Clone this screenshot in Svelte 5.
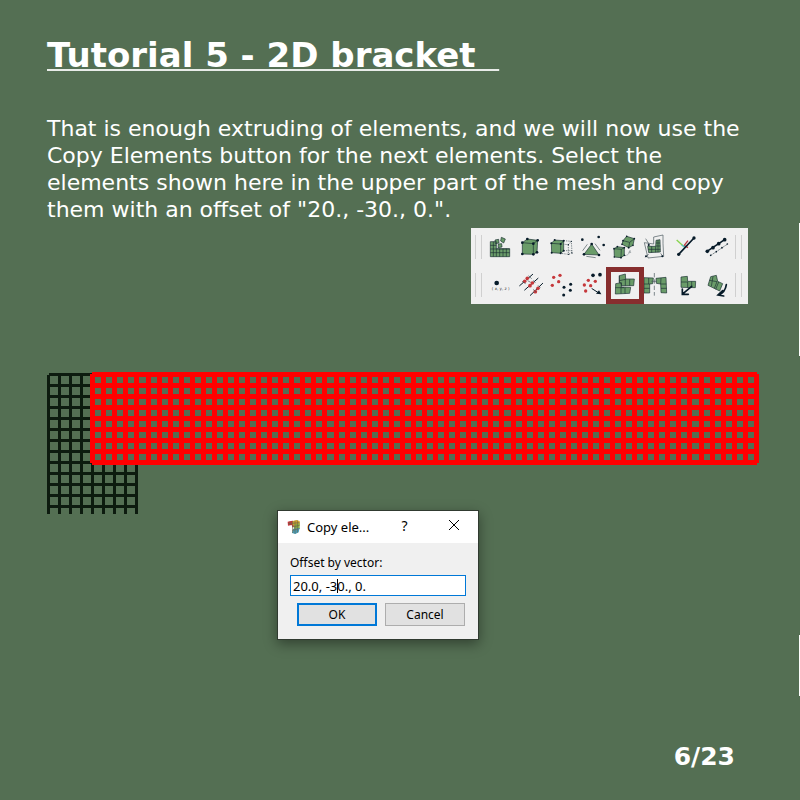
<script>
  const title = 'Tutorial 5 - 2D bracket\u00a0\u00a0';
  let vector = $state('20.0, -30., 0.');

  const darkCols = Array.from({ length: 9 }, (_, k) => k * 11);
  const darkRows = Array.from({ length: 13 }, (_, k) => 1 + k * 11);
  const redCols = Array.from({ length: 61 }, (_, k) => 43 + 11 * k + Math.floor(k * 0.06 + 0.72));
  const redRows = Array.from({ length: 9 }, (_, k) => k * 11);

  const topTools = ['Grid', 'Solid', 'Extrude', 'Fill', 'Copy solid', 'Project', 'Split edge', 'Refine edge'];
  const bottomTools = ['Create node', 'Merge nodes', 'Copy nodes', 'Move nodes', 'Copy elements', 'Mirror elements', 'Move elements', 'Rotate elements'];
</script>

{#snippet dots(points, r, cls)}
  {#each points as [x, y]}
    <circle cx={x} cy={y} {r} class={cls} />
  {/each}
{/snippet}

{#snippet topIcon(i)}
  {#if i === 0}
    <path class="g" d="M76 59H94V80H134V104H76ZM90 54l11-2 1 11-11 2ZM109 46l12 5-5 12-9-6ZM100 66l10-1 1 10-12 2Z" />
    <path class="l" d="M76 70H94M76 81H134M76 92H134M85 59V104M94 80V104M104 80V104M114 80V104M124 80V104" />
  {:else if i === 1}
    <path class="g" d="M172 62L187 51L218 55L216 91L205 97L172 96Z" />
    <path class="l" d="M172 62L205 65L218 55M205 65V97" />
    {@render dots([[172, 62], [187, 51], [218, 55], [216, 91], [205, 97], [172, 96], [205, 65]], 4, 'k')}
  {:else if i === 2}
    <path class="g" d="M259 64L269 54L296 56L296 86L287 94L260 92Z" />
    <path class="l" d="M259 64L287 66L296 56M287 66V94" />
    <path class="thin" stroke-dasharray="4 3" d="M296 56L319 58L321 91L311 97L287 94M287 66L310 68L319 58M310 68V97M296 86H321" />
    {@render dots([[259, 64], [269, 54], [296, 56], [296, 86], [287, 94], [260, 92], [287, 66]], 3, 'k')}
    {@render dots([[319, 58], [310, 68], [321, 93], [311, 97]], 2, 'k')}
  {:else if i === 3}
    <path class="g" d="M380 66L402 99L357 97Z" />
    <path class="thin" d="M367 67L353 86M390 65L405 85M364 103L392 107" />
    {@render dots([[380, 66], [402, 99], [357, 97], [352, 53], [401, 45], [416, 69]], 4, 'k')}
  {:else if i === 4}
    <path class="g" d="M447 80L457 74L478 77L478 100L468 107L448 105ZM474 56L485 43L508 50L504 70L491 77L471 67Z" />
    <path class="l" d="M447 80L469 82L478 77M469 82L468 107M474 56L494 61L508 50M494 61L491 77" />
    <path class="thin" stroke-dasharray="3 2" d="M480 101Q492 99 495 87M491 91L495 86L497 92" />
    {@render dots([[447, 80], [457, 74], [478, 77], [478, 100], [468, 107], [448, 105], [474, 56], [485, 43], [508, 50], [504, 70], [491, 77], [471, 67]], 2.5, 'k')}
  {:else if i === 5}
    <path class="thin" d="M566 45L594 39V65L596 103L549 108L538 62L566 66Z" />
    <path class="g" d="M548 73H572L573 55L585 53L586 90L551 92Z" />
    <path class="l" d="M549 82H586M573 72H586M573 63H585M560 73V92M572 73V91M579 54V91" />
    <path class="thin" d="M551 96L541 106M587 94L594 104M542 50L554 70" />
    {@render dots([[551, 69], [543, 103], [592, 103]], 3, 'k')}
  {:else if i === 6}
    <path d="M635 54L658 75" fill="none" stroke="#87d44d" stroke-width="4" />
    <path d="M657 71L669 56M658 71L669 77" fill="none" stroke="#b83a40" stroke-width="4" />
    <path d="M650 69L661 76" fill="none" stroke="#57bec7" stroke-width="4" />
    <path class="heavy" d="M641 97L687 48" />
    {@render dots([[641, 97], [687, 48]], 5, 'k')}
  {:else}
    <path class="heavy" d="M726 88L779 53" />
    <path class="thin" stroke-dasharray="7 2" d="M736 101L788 66" />
    {@render dots([[727, 88], [744, 77], [761, 65], [779, 53]], 5.5, 'k')}
    {@render dots([[737, 100], [754, 89], [771, 77], [787, 66]], 2.5, 'k')}
  {/if}
{/snippet}

{#snippet bottomIcon(i)}
  {#if i === 0}
    <circle cx="95" cy="183" r="7" class="k" />
    <text x="107" y="205" font-size="12" text-anchor="middle">( x, y, z )</text>
  {:else if i === 1}
    <path class="heavy dash" d="M164 191L203 157M179 204L219 169M196 220L233 184" />
    {@render dots([[179, 178], [187, 169], [195, 191], [202, 183], [211, 209], [219, 199]], 5.5, 'r')}
    <path class="thin" d="M171 178L182 185M190 161L200 170M188 176L197 181M205 175L211 183M204 202L213 210M219 190L226 197" />
  {:else if i === 2}
    {@render dots([[266, 166], [285, 160], [281, 179], [262, 190]], 5, 'r')}
    {@render dots([[297, 196], [317, 187], [316, 205], [296, 219]], 4.5, 'k')}
  {:else if i === 3}
    {@render dots([[370, 175], [391, 178], [358, 189], [377, 191], [362, 207]], 5, 'r')}
    {@render dots([[384, 160], [405, 158]], 5.5, 'k')}
    <path class="heavy dash" d="M381 200L400 212" />
    <path class="k" d="M409 217L393 215L402 205Z" />
  {:else if i === 4}
    <path class="g" d="M463 161L481 156L482 171H508L506 191H469V184L463 182ZM452 185L469 182V195L497 196L494 214L451 216Z" />
    <path class="l" d="M463 176L482 172M481 171V191M494 172V191M451 197H477M468 195V215M480 196V215M463 161V182" />
  {:else if i === 5}
    <path class="g" d="M537 167L565 168L563 185L554 186V213H537ZM573 169L603 166L605 213L588 212L587 186L574 184Z" />
    <path class="l" d="M537 186H554M551 168V186M537 199H554M588 168L587 186H604M588 199H605" />
    <path class="thin" stroke-dasharray="13 6" d="M568 153V221" />
    <path class="thin" d="M559 178H576" />
  {:else if i === 6}
    <path class="g" d="M648 165L667 163L668 178H692L691 197L648 196Z" />
    <path class="l" d="M648 180H668V197M680 178V197" />
    <path class="heavy" d="M680 193L654 215M652 201L652 217L670 217" />
  {:else}
    <path class="g" d="M737 164L754 160L758 178L773 185L764 207L729 190Z" />
    <path class="l" d="M733 175L756 179L748 199M761 180L752 202M744 163L739 193" />
    <path class="heavy" d="M784 188Q781 211 761 219M773 206L759 219L776 222" />
  {/if}
{/snippet}

{#snippet icon(row, i)}
  <svg width="31" height="38" viewBox="{57 + 93 * i} {18 + 114 * row} 93 114" aria-hidden="true">
    {#if row === 0}{@render topIcon(i)}{:else}{@render bottomIcon(i)}{/if}
  </svg>
{/snippet}

<main>
  <h1>{title}</h1>
  <p class="intro">
    That is enough extruding of elements, and we will now use the Copy Elements button for the next elements. Select
    the elements shown here in the upper part of the mesh and copy them with an offset of "20., -30., 0.".
  </p>

  <div class="toolbar" role="toolbar" aria-label="Mesh tools">
    {#each [topTools, bottomTools] as tools, row}
      <div class="tools">
        <i class="grip"></i>
        {#each tools as name, i}
          <button class="tool" class:picked={row === 1 && i === 4} aria-label={name}>{@render icon(row, i)}</button>
        {/each}
        <i class="grip"></i>
      </div>
    {/each}
  </div>

  <svg class="mesh" viewBox="0 0 712 142" shape-rendering="crispEdges" role="img" aria-label="Bracket mesh with selected elements">
    <g fill="#0d1b0f">
      {#each darkCols as x}<rect {x} y="3" width="3" height="139" />{/each}
      {#each darkRows as y}<rect x="2" {y} width="89" height="3" />{/each}
    </g>
    <g fill="#ff0000">
      {#each redCols as x}<rect {x} y="2" width="5" height="89" />{/each}
      {#each redRows as y}<rect x="45" {y} width="665" height="5" />{/each}
    </g>
  </svg>

  <form class="dialog" onsubmit={(e) => e.preventDefault()}>
    <header>
      <svg class="logo" width="14" height="16" viewBox="0 0 42 48" aria-hidden="true">
        <path d="M2 8L16 5L24 7L23 22L16 25L14 18L3 20Z" fill="#c8333b" />
        <path d="M16 7L28 3L38 6V18L22 21L16 18Z" fill="#d8a92c" />
        <path d="M22 17L38 12V30L20 33Z" fill="#8aaf43" />
        <path d="M18 30L38 26L35 40L25 45L15 42Z" fill="#47a0bf" />
        <path d="M3 14L38 11M16 24L38 19M16 34L37 29M9 7V18M17 6V42M24 5V44M31 4V41" fill="none" stroke="#6b6445" stroke-width="2" />
      </svg>
      <span class="caption">Copy ele...</span>
      <button type="button" class="sys" aria-label="Help">?</button>
      <button type="button" class="sys" aria-label="Close">
        <svg width="12" height="12" viewBox="0 0 12 12" aria-hidden="true"><path d="M1 1L11 11M11 1L1 11" fill="none" stroke="#000" /></svg>
      </button>
    </header>
    <div class="body">
      <label for="vector">Offset by vector:</label>
      <div class="field"><input id="vector" type="text" bind:value={vector} /><i class="caret"></i></div>
      <div class="actions">
        <button class="btn primary">OK</button>
        <button type="button" class="btn">Cancel</button>
      </div>
    </div>
  </form>

  <footer>6/23</footer>
  <i class="edge upper"></i>
  <i class="edge lower"></i>
</main>

<style>
  :global(body) {
    margin: 0;
    background: #546f53;
  }
  main {
    position: relative;
    box-sizing: border-box;
    display: flex;
    flex-direction: column;
    min-height: 100vh;
    padding: 35px 41px 28px 47px;
    overflow: hidden;
    color: #fff;
    font-family: 'DejaVu Sans', sans-serif;
  }
  h1 {
    margin: 0;
    font-size: 34px;
    line-height: 40px;
    text-decoration: underline;
    text-decoration-color: #e8ece8;
    text-decoration-thickness: 2px;
    text-underline-offset: 2px;
  }
  .intro {
    max-width: 700px;
    margin: 40px 0 0;
    font-size: 22px;
    line-height: 27px;
  }
  .toolbar {
    align-self: flex-end;
    margin: 5px 11px 0 0;
    background: #f0f0f0;
  }
  .tools {
    display: flex;
    align-items: center;
    padding: 0 6px 0 4px;
  }
  .grip {
    box-sizing: border-box;
    width: 7px;
    height: 24px;
    border: solid #d0d0d0;
    border-width: 0 1px;
  }
  .tool {
    position: relative;
    width: 31px;
    height: 38px;
    padding: 0;
    border: 0;
    background: none;
  }
  .grip + .tool {
    margin-left: 2px;
  }
  .tool + .grip {
    margin-left: 3px;
  }
  .tool svg {
    display: block;
    overflow: visible;
  }
  .picked::after {
    content: '';
    position: absolute;
    z-index: 1;
    inset: 1px -5px 0 -2px;
    border: 5px solid #872e2e;
  }
  .g {
    fill: #6a9c69;
    stroke: #1b3033;
    stroke-width: 2;
    stroke-linejoin: round;
  }
  .l {
    fill: none;
    stroke: #1b3033;
    stroke-width: 2;
  }
  .thin {
    fill: none;
    stroke: #46545b;
    stroke-width: 2;
  }
  .heavy {
    fill: none;
    stroke: #071b29;
    stroke-width: 5;
    stroke-linecap: round;
  }
  .dash {
    stroke-width: 3;
  }
  .k {
    fill: #071b29;
  }
  .r {
    fill: #c6383b;
  }
  .tool text {
    fill: #333;
    font-family: 'DejaVu Sans', sans-serif;
  }
  .mesh {
    display: block;
    width: 100%;
    margin-top: 68px;
  }
  .dialog {
    box-sizing: border-box;
    width: 202px;
    margin: -4px 0 0 230px;
    border: 1px solid #303a30;
    background: #f0f0f0;
    box-shadow: 0 4px 12px rgba(0, 0, 0, 0.4);
    color: #000;
    font: 12px/16px 'Noto Sans', sans-serif;
  }
  header {
    display: flex;
    align-items: center;
    height: 32px;
    padding-left: 9px;
    background: #fff;
  }
  .caption {
    flex: 1;
    margin-left: 6px;
    font-size: 13px;
    white-space: nowrap;
  }
  .sys {
    width: 49px;
    height: 32px;
    padding: 0 0 2px;
    border: 0;
    background: none;
    color: #000;
    font: 14px/16px 'Noto Sans', sans-serif;
  }
  .body {
    padding: 12px 12px 13px;
  }
  label {
    display: block;
  }
  .field {
    position: relative;
    margin-top: 4px;
  }
  input {
    display: block;
    box-sizing: border-box;
    width: 100%;
    height: 21px;
    padding: 1px 2px 0;
    border: 1px solid #0078d7;
    background: #fff;
    color: #000;
    font: inherit;
    font-size: 13px;
    outline: 0;
  }
  .caret {
    position: absolute;
    left: 47px;
    top: 4px;
    width: 1px;
    height: 14px;
    background: #000;
  }
  .actions {
    display: flex;
    justify-content: flex-end;
    gap: 8px;
    margin: 7px 1px 0 0;
  }
  .btn {
    width: 80px;
    height: 23px;
    padding: 1px 0 0;
    border: 1px solid #adadad;
    background: #e1e1e1;
    color: #000;
    font: inherit;
  }
  .primary {
    border: 2px solid #0078d7;
  }
  footer {
    margin-top: auto;
    padding-right: 24px;
    text-align: right;
    font-size: 25px;
    font-weight: bold;
    line-height: 30px;
  }
  .edge {
    position: absolute;
    right: 0;
    width: 1px;
    background: #fff;
  }
  .upper {
    top: 223px;
    height: 133px;
  }
  .lower {
    top: 635px;
    height: 61px;
  }
</style>
